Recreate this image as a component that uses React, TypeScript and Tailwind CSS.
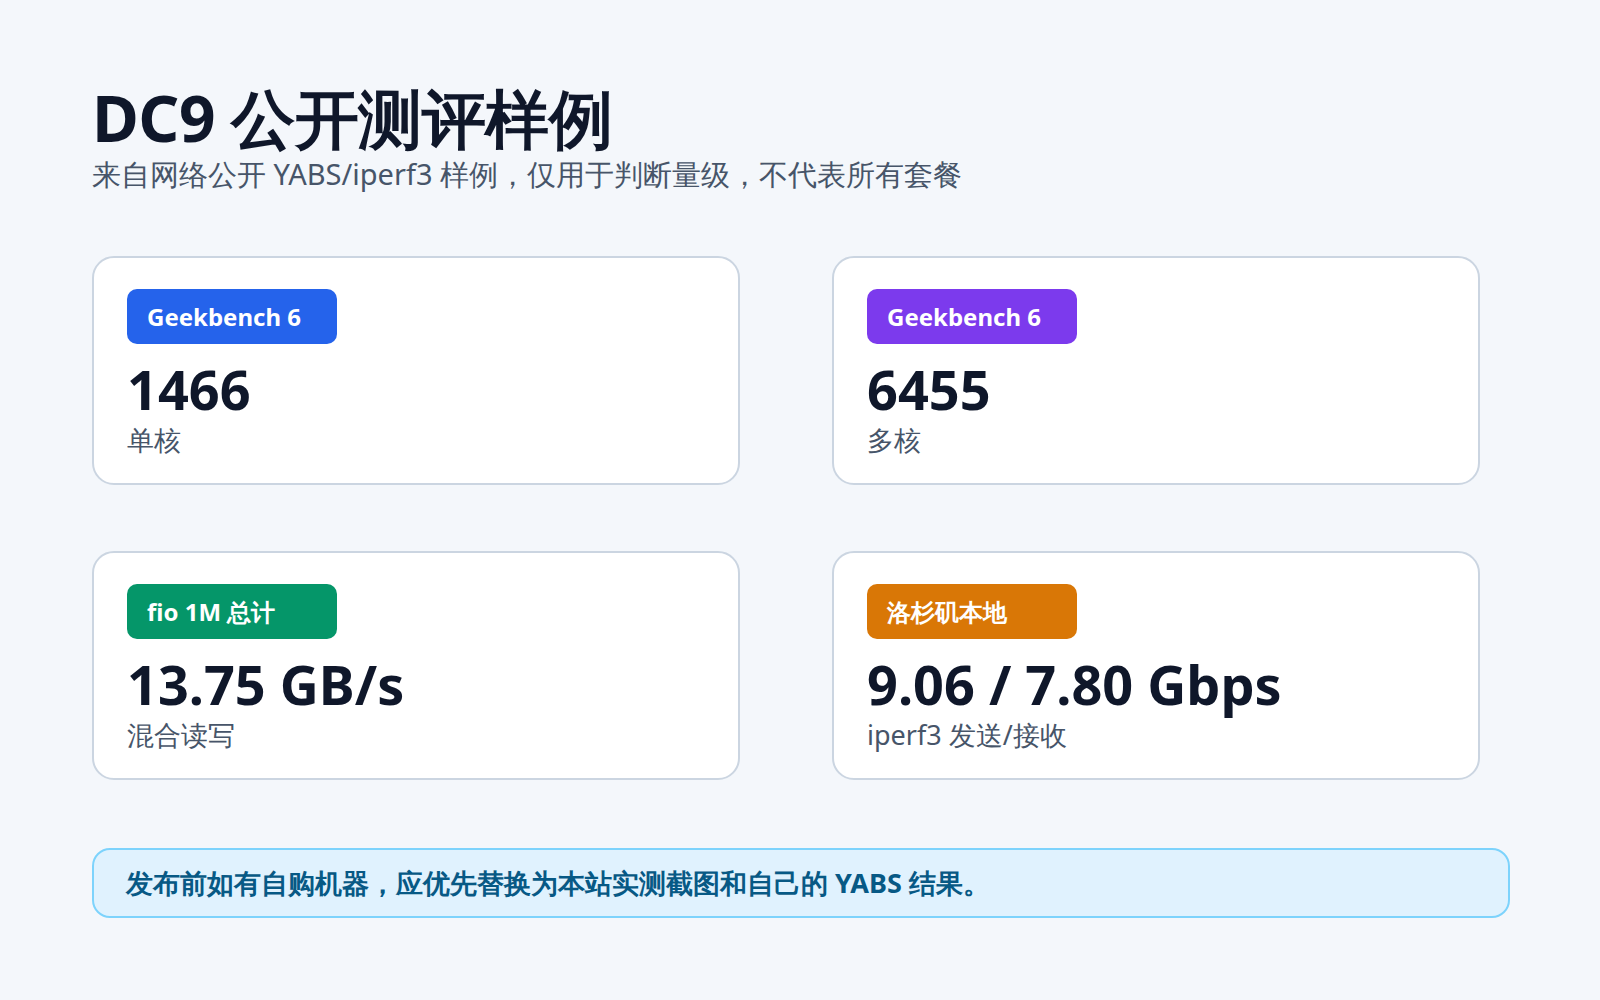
const cards = [
  { tag: "Geekbench 6", color: "bg-[#2563eb]", value: "1466", label: "单核" },
  { tag: "Geekbench 6", color: "bg-[#7c3aed]", value: "6455", label: "多核" },
  { tag: "fio 1M 总计", color: "bg-[#059669]", value: "13.75 GB/s", label: "混合读写" },
  { tag: "洛杉矶本地", color: "bg-[#d97706]", value: "9.06 / 7.80 Gbps", label: "iperf3 发送/接收" },
];

export default function App() {
  return (
    <div className="min-h-[1000px] w-[1600px] bg-[#f4f7fb] px-[92px] pt-[80px] text-[#0f172a] [font-family:'Noto_Sans','Noto_Sans_CJK_SC',sans-serif]">
      <h1 className="text-[64px] font-bold leading-[76px] tracking-[-0.5px]">DC9 公开测评样例</h1>
      <p className="text-[29px] leading-[36px] text-[#475569]">来自网络公开 YABS/iperf3 样例，仅用于判断量级，不代表所有套餐</p>
      <div className="mt-[64px] grid w-[1388px] grid-cols-2 gap-x-[92px] gap-y-[66px]">
        {cards.map((c, i) => (
          <div key={i} className="h-[229px] rounded-[22px] border-2 border-[#cbd5e1] bg-white px-[33px] pt-[31px]">
            <span className={`inline-flex h-[55px] w-[210px] items-center rounded-[10px] px-[20px] text-[24px] font-bold text-white ${c.color}`}>
              {c.tag}
            </span>
            <div className="mt-[12px] text-[54px] font-bold leading-[66px]">{c.value}</div>
            <div className="text-[27px] leading-[36px] text-[#475569]">{c.label}</div>
          </div>
        ))}
      </div>
      <div className="mt-[68px] flex h-[70px] w-[1418px] items-center rounded-[18px] border-2 border-[#7dd3fc] bg-[#e0f2fe] px-[32px] text-[27px] font-bold text-[#075985]">
        发布前如有自购机器，应优先替换为本站实测截图和自己的 YABS 结果。
      </div>
    </div>
  );
}
